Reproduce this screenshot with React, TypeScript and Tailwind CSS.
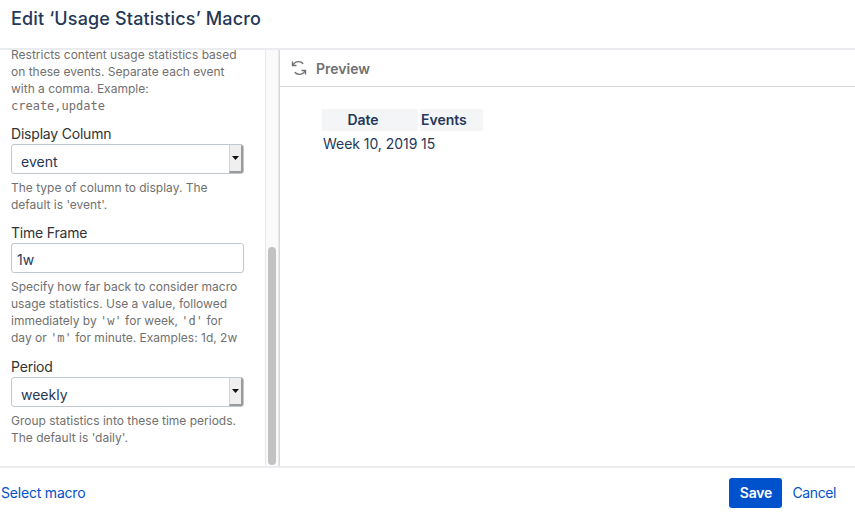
const font = { fontFamily: "Inter, 'Noto Sans', sans-serif" }

function Help({ children }: { children: React.ReactNode }) {
  return <div className="mt-[5px] shrink-0 text-[12px] leading-[17px] text-[#707070]">{children}</div>
}

function Code({ children }: { children: React.ReactNode }) {
  return <span className="font-['DejaVu_Sans_Mono',monospace] text-[12px] leading-none">{children}</span>
}

function FieldLabel({ children }: { children: React.ReactNode }) {
  return <div className="h-[20px] shrink-0 text-[14px] leading-[20px] tracking-[-0.2px] text-[#333333]">{children}</div>
}

function SelectBox({ value }: { value: string }) {
  return (
    <div className="flex h-[30px] w-[233px] shrink-0 items-stretch overflow-hidden rounded-[3px] border border-[#c1c7d0] bg-white">
      <div className="flex-1 pl-[9px] text-[14px] leading-[33px] text-[#253858]">{value}</div>
      <div className="flex w-[14px] items-center justify-center border-r-2 border-b-2 border-l border-r-[#9a9a9a] border-b-[#9a9a9a] border-l-[#d4d4d4] bg-[#efefef]">
        <svg width="7" height="4" viewBox="0 0 7 4"><path d="M0 0h7L3.5 4z" fill="#111" /></svg>
      </div>
    </div>
  )
}

function SyncIcon() {
  return (
    <svg width="16" height="16" viewBox="0 0 16 16" fill="none" stroke="#707070" strokeWidth="1.4">
      <path d="M1.5 1.5v4h4" />
      <path d="M2 5.2C3 3 5 1.6 7.6 1.6c1.9 0 3.6.8 4.6 2.1" />
      <path d="M14.5 14.5v-4h-4" />
      <path d="M14 10.8c-1 2.2-3 3.6-5.6 3.6-1.9 0-3.6-.8-4.6-2.1" />
    </svg>
  )
}

export default function App() {
  return (
    <div style={font} className="flex h-[513px] w-[855px] flex-col overflow-hidden bg-white">
      <div className="h-[48px] shrink-0 pl-[11px] pt-[6px] text-[18px] font-medium leading-[26px] tracking-[0.15px] text-[#253858]">
        Edit ‘Usage Statistics’ Macro
      </div>
      <div className="flex min-h-0 flex-1 border-y-2 border-[#ebecf0]">
        <div className="flex w-[265px] shrink-0 flex-col justify-end overflow-hidden pb-[20px] pl-[11px] pr-[20px]">
          <div className="shrink-0 text-[12px] leading-[17px] text-[#707070]">
            Restricts content usage statistics based on these events. Separate each event with a comma. Example:{" "}
            <Code>create,update</Code>
          </div>
          <div className="mt-[10px] shrink-0"><FieldLabel>Display Column</FieldLabel></div>
          <SelectBox value="event" />
          <Help>The type of column to display. The default is 'event'.</Help>
          <div className="mt-[10px] shrink-0"><FieldLabel>Time Frame</FieldLabel></div>
          <div className="h-[30px] w-[233px] shrink-0 rounded-[3px] border border-[#c1c7d0] pl-[5px] text-[14px] leading-[31px] text-[#253858]">1w</div>
          <Help>
            Specify how far back to consider macro usage statistics. Use a value, followed immediately by <Code>'w'</Code> for week, <Code>'d'</Code> for day or <Code>'m'</Code> for minute. Examples: 1d, 2w
          </Help>
          <div className="mt-[11px] shrink-0"><FieldLabel>Period</FieldLabel></div>
          <SelectBox value="weekly" />
          <Help>Group statistics into these time periods. The default is 'daily'.</Help>
        </div>
        <div className="flex w-[14px] shrink-0 flex-col justify-end border-x border-[#e8e8e8] bg-[#fafafa] pb-[1px] pl-[2px]">
          <div className="h-[218px] w-[8px] rounded-[4px] bg-[#c2c2c2]" />
        </div>
        <div className="min-w-0 flex-1 border-l border-[#d8d8d8]">
          <div className="flex h-[37px] items-center gap-[9px] border-b border-[#d8d8d8] pl-[11px]">
            <SyncIcon />
            <span className="text-[14px] font-semibold text-[#707070]">Preview</span>
          </div>
          <div className="pl-[42px] pt-[22px] text-[14px] text-[#253858]">
            <div className="flex gap-[2px]">
              <div className="h-[22px] w-[96px] bg-[#f4f5f7] pr-[14px] text-center font-semibold leading-[22px]">Date</div>
              <div className="h-[22px] w-[63px] bg-[#f4f5f7] pl-[1px] font-semibold leading-[22px]">Events</div>
            </div>
            <div className="mt-[3px] flex gap-[2px] leading-[20px]">
              <div className="w-[96px] pl-[1px] whitespace-nowrap tracking-[-0.05px]">Week 10, 2019</div>
              <div className="pl-[1px]">15</div>
            </div>
          </div>
        </div>
      </div>
      <div className="flex h-[45px] shrink-0 items-start justify-between pl-[1px] pr-[19px] pt-[10px] text-[14px] leading-[30px] tracking-[-0.2px]">
        <span className="text-[#0052cc]">Select macro</span>
        <div className="flex items-center gap-[10px]">
          <div className="flex h-[30px] w-[53px] items-center justify-center rounded-[3px] bg-[#0052cc] font-semibold text-white">Save</div>
          <span className="tracking-[-0.4px] text-[#0052cc]">Cancel</span>
        </div>
      </div>
    </div>
  )
}
